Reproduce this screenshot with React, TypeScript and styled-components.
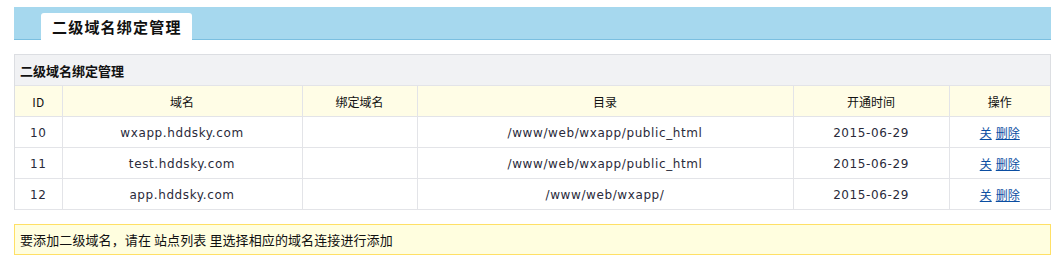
import React from "react";
import styled, { createGlobalStyle } from "styled-components";

const GlobalStyle = createGlobalStyle`
  html, body { margin: 0; padding: 0; background: #fff; }
  body { font-family: "DejaVu Sans", "Noto Sans CJK SC", sans-serif; color: #222; }
`;

const Page = styled.div`
  padding: 7px 5px 0 14px;
  width: 1037px;
`;

const HeaderBar = styled.div`
  display: flex;
  align-items: flex-end;
  height: 32px;
  padding-left: 27px;
  background: #a6d8ee;
  border-bottom: 1px solid #7bbfe0;
`;

const Tab = styled.div`
  height: 27px;
  margin-bottom: -1px;
  padding: 0 10px 0 11px;
  background: #fff;
  border-radius: 3px 3px 0 0;
  font-family: "Noto Sans CJK SC", sans-serif;
  font-weight: bold;
  font-size: 15px;
  letter-spacing: 1.2px;
  line-height: 28px;
  color: #111;
`;

const Panel = styled.div`
  margin-top: 14px;
  border: 1px solid #dcdee2;
  border-bottom: none;
`;

const PanelTitle = styled.div`
  height: 30px;
  line-height: 31px;
  padding-left: 5px;
  background: #f1f2f4;
  font-family: "Noto Sans CJK SC", sans-serif;
  font-weight: bold;
  font-size: 13px;
  color: #111;
`;

const Table = styled.table`
  width: 1035px;
  border-collapse: collapse;
  table-layout: fixed;
`;

const Col = styled.col<{ $w: number }>`
  width: ${(p) => p.$w}px;
`;

const Th = styled.th`
  height: 29px;
  padding: 1px 0 0;
  background: #fffde6;
  border: 1px solid #e3e4e8;
  border-left: none;
  font-family: "Noto Sans CJK SC", sans-serif;
  font-weight: normal;
  font-size: 12px;
  color: #111;
  text-align: center;
  &:last-child { border-right: none; }
`;

const Td = styled.td`
  height: 29px;
  padding: 1px 0 0;
  border: 1px solid #e3e4e8;
  border-left: none;
  font-size: 12px;
  letter-spacing: 0.6px;
  color: #2a2a3a;
  text-align: center;
  &:last-child { border-right: none; }
`;

const ActionLink = styled.a`
  color: #0b4ea2;
  text-decoration: underline;
  font-family: "Noto Sans CJK SC", sans-serif;
  font-size: 12px;
  letter-spacing: 0;
  margin: 0 2px;
  cursor: pointer;
`;

const Notice = styled.div`
  margin-top: 14px;
  height: 29px;
  line-height: 30px;
  padding-left: 5px;
  background: #fffedf;
  border: 1px solid #ffe066;
  font-family: "Noto Sans CJK SC", sans-serif;
  font-size: 13px;
  letter-spacing: 0.1px;
  color: #111;
`;

const rows = [
  { id: 10, domain: "wxapp.hddsky.com", bind: "", dir: "/www/web/wxapp/public_html", date: "2015-06-29" },
  { id: 11, domain: "test.hddsky.com", bind: "", dir: "/www/web/wxapp/public_html", date: "2015-06-29" },
  { id: 12, domain: "app.hddsky.com", bind: "", dir: "/www/web/wxapp/", date: "2015-06-29" },
];

const widths = [47, 240, 115, 376, 156, 101];

export default function App() {
  return (
    <>
      <GlobalStyle />
      <Page>
        <HeaderBar>
          <Tab>二级域名绑定管理</Tab>
        </HeaderBar>
        <Panel>
          <PanelTitle>二级域名绑定管理</PanelTitle>
          <Table>
            <colgroup>
              {widths.map((w, i) => (
                <Col key={i} $w={w} />
              ))}
            </colgroup>
            <thead>
              <tr>
                <Th>ID</Th>
                <Th>域名</Th>
                <Th>绑定域名</Th>
                <Th>目录</Th>
                <Th>开通时间</Th>
                <Th>操作</Th>
              </tr>
            </thead>
            <tbody>
              {rows.map((r) => (
                <tr key={r.id}>
                  <Td>{r.id}</Td>
                  <Td>{r.domain}</Td>
                  <Td>{r.bind}</Td>
                  <Td>{r.dir}</Td>
                  <Td>{r.date}</Td>
                  <Td>
                    <ActionLink>关</ActionLink>
                    <ActionLink>删除</ActionLink>
                  </Td>
                </tr>
              ))}
            </tbody>
          </Table>
        </Panel>
        <Notice>要添加二级域名，请在 站点列表 里选择相应的域名连接进行添加</Notice>
      </Page>
    </>
  );
}
